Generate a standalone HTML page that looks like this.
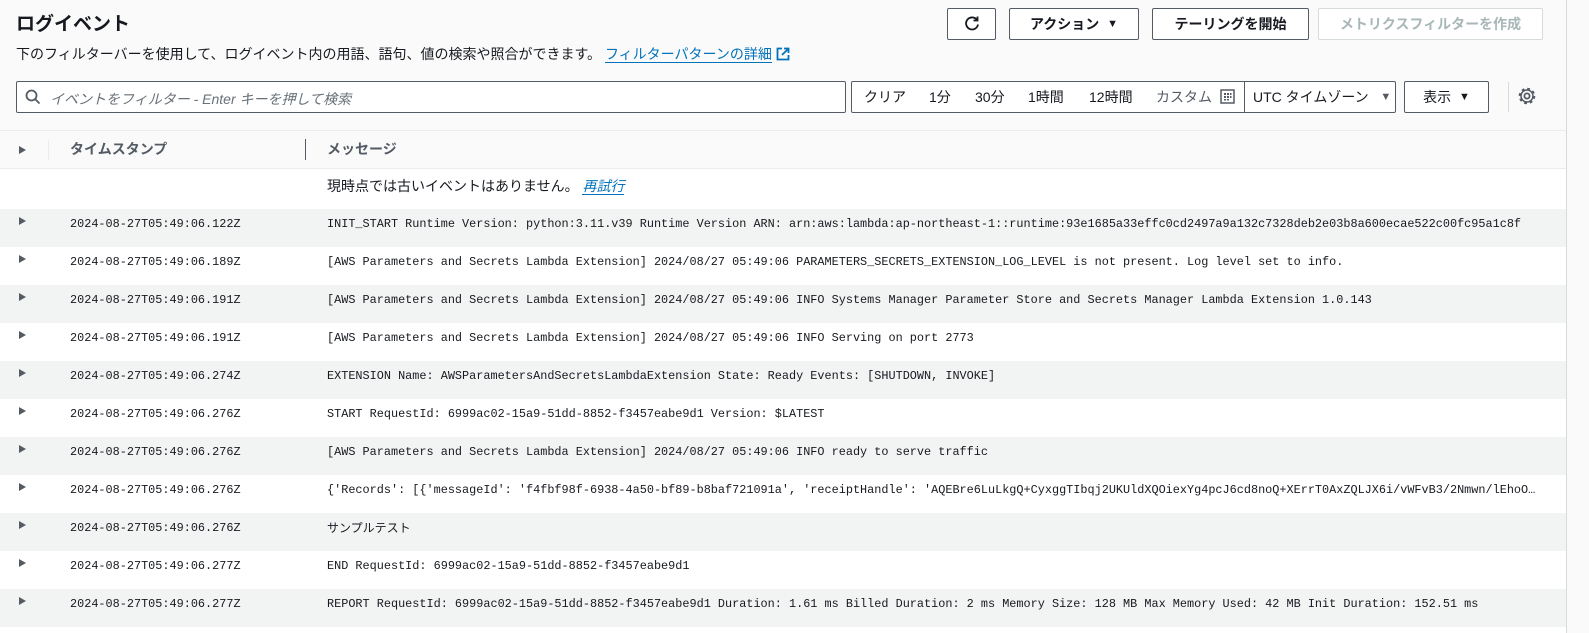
<!DOCTYPE html>
<html><head><meta charset="utf-8"><style>
*{box-sizing:border-box;margin:0;padding:0}
body{width:1589px;height:633px;overflow:hidden;background:#fff;font-family:"Liberation Sans","Noto Sans CJK JP",sans-serif;color:#16191f;position:relative}
.top{position:absolute;left:0;top:0;width:1589px;height:168px;background:#fafafa}
.abs{position:absolute}
.btn{position:absolute;height:32px;border:1px solid #545b64;border-radius:2px;background:#fff;font-size:14px;font-weight:bold;display:flex;align-items:center;justify-content:center;color:#16191f}
.mono{font-family:"Liberation Mono","Noto Sans CJK JP",monospace;font-size:11.85px}
.row{position:absolute;left:0;width:1566px;height:38px}
.row.g{background:#f2f3f3}
.row .tri{position:absolute;left:19px;top:8px;width:0;height:0;border-left:7px solid #545b64;border-top:4.5px solid transparent;border-bottom:4.5px solid transparent}
.row .ts{position:absolute;left:70px;top:7px;line-height:16px;color:#16191f}
.row .msg{position:absolute;left:327px;top:7px;line-height:16px;width:1210px;white-space:nowrap;overflow:hidden;text-overflow:ellipsis;color:#16191f}
.seg{position:absolute;top:81px;height:32px;font-size:14px;display:flex;align-items:center}
</style></head><body>
<div class="top"></div>
<div class="abs" style="left:16px;top:9px;font-size:19px;font-weight:bold">ログイベント</div>
<div class="abs" style="left:16px;top:44px;font-size:14px">下のフィルターバーを使用して、ログイベント内の用語、語句、値の検索や照合ができます。 <span style="color:#0073bb;border-bottom:1px solid #0073bb">フィルターパターンの詳細</span> <svg width="14" height="14" viewBox="0 0 14 14" style="vertical-align:-2px"><path d="M6 1.5H1.5v11h11V8" fill="none" stroke="#0073bb" stroke-width="1.8"/><path d="M8 1.5h4.5V6M12.5 1.5L6 8" fill="none" stroke="#0073bb" stroke-width="1.8"/></svg></div>

<div class="btn" style="left:947px;top:8px;width:49px"><svg width="18" height="18" viewBox="0 0 18 18"><path d="M14 5A6 6 0 1 0 15 9.5" fill="none" stroke="#16191f" stroke-width="1.8"/><path d="M14.5 1.5V5.5H10.5" fill="none" stroke="#16191f" stroke-width="1.8"/></svg></div>
<div class="btn" style="left:1009px;top:8px;width:130px">アクション&nbsp;&nbsp;<span style="font-size:11px">▼</span></div>
<div class="btn" style="left:1152px;top:8px;width:157px">テーリングを開始</div>
<div class="btn" style="left:1318px;top:8px;width:225px;border-color:#d5dbdb;color:#aab7b8">メトリクスフィルターを作成</div>

<div class="abs" style="left:16px;top:81px;width:830px;height:32px;border:1px solid #545b64;border-radius:2px;background:#fff">
<svg class="abs" style="left:8px;top:7px" width="16" height="16" viewBox="0 0 16 16"><circle cx="6.5" cy="6.5" r="5" fill="none" stroke="#545b64" stroke-width="1.8"/><path d="M10 10l4.5 4.5" stroke="#545b64" stroke-width="1.8"/></svg>
<div class="abs" style="left:33px;top:7px;font-size:14px;font-style:italic;color:#687078">イベントをフィルター - Enter キーを押して検索</div>
</div>
<div class="abs" style="left:851px;top:81px;width:545px;height:32px;border:1px solid #545b64;border-radius:2px;background:#fff"></div>
<div class="abs" style="left:1244px;top:82px;width:1px;height:30px;background:#545b64"></div>
<div class="seg" style="left:864px">クリア</div>
<div class="seg" style="left:929px">1分</div>
<div class="seg" style="left:975px">30分</div>
<div class="seg" style="left:1028px">1時間</div>
<div class="seg" style="left:1089px">12時間</div>
<div class="seg" style="left:1156px;color:#545b64">カスタム</div>
<svg class="abs" style="left:1220px;top:89px" width="15" height="15" viewBox="0 0 15 15"><rect x="1" y="1" width="13" height="13" fill="none" stroke="#545b64" stroke-width="1.5"/><g fill="#545b64"><rect x="4" y="4" width="2" height="2"/><rect x="7" y="4" width="2" height="2"/><rect x="10" y="4" width="1.5" height="2"/><rect x="4" y="7" width="2" height="2"/><rect x="7" y="7" width="2" height="2"/><rect x="10" y="7" width="1.5" height="2"/><rect x="4" y="10" width="2" height="1.5"/><rect x="7" y="10" width="2" height="1.5"/></g></svg>
<div class="seg" style="left:1253px">UTC タイムゾーン&nbsp;&nbsp;&nbsp;<span style="font-size:11px;color:#545b64">▼</span></div>
<div class="btn" style="left:1404px;top:81px;width:85px;font-weight:normal">表示&nbsp;&nbsp;<span style="font-size:11px">▼</span></div>
<div class="abs" style="left:1508px;top:82px;width:1px;height:30px;background:#d5dbdb"></div>
<svg class="abs" style="left:1517px;top:86px" width="20" height="20" viewBox="0 0 20 20"><circle cx="10" cy="10" r="2.6" fill="none" stroke="#545b64" stroke-width="1.8"/><circle cx="10" cy="10" r="6.8" fill="none" stroke="#545b64" stroke-width="3" stroke-dasharray="2.6 2.74"/><circle cx="10" cy="10" r="6" fill="none" stroke="#545b64" stroke-width="1.5"/></svg>

<div class="abs" style="left:0;top:130px;width:1566px;height:1px;background:#eaeded"></div>
<div class="abs" style="left:0;top:168px;width:1566px;height:1px;background:#eaeded"></div>
<div class="abs" style="left:19px;top:146px;border-left:7px solid #545b64;border-top:4.5px solid transparent;border-bottom:4.5px solid transparent"></div>
<div class="abs" style="left:48px;top:140px;width:1px;height:20px;background:#eaeded"></div>
<div class="abs" style="left:70px;top:139px;font-size:14px;font-weight:bold;color:#545b64">タイムスタンプ</div>
<div class="abs" style="left:305px;top:139px;width:1px;height:21px;background:#545b64"></div>
<div class="abs" style="left:327px;top:176px;font-size:14px">現時点では古いイベントはありません。 <span style="color:#0073bb;font-style:italic;border-bottom:1px solid #0073bb">再試行</span></div>
<div class="abs" style="left:327px;top:139px;font-size:14px;font-weight:bold;color:#545b64">メッセージ</div>

<div class="abs" style="left:1566px;top:0;width:1px;height:633px;background:#d5dbdb"></div>
<div class="abs" style="left:1567px;top:0;width:22px;height:633px;background:#fafafa"></div>

<div class="row g mono" style="top:209px"><div class="tri"></div><div class="ts">2024-08-27T05:49:06.122Z</div><div class="msg">INIT_START Runtime Version: python:3.11.v39 Runtime Version ARN: arn:aws:lambda:ap-northeast-1::runtime:93e1685a33effc0cd2497a9a132c7328deb2e03b8a600ecae522c00fc95a1c8f</div></div>
<div class="row mono" style="top:247px"><div class="tri"></div><div class="ts">2024-08-27T05:49:06.189Z</div><div class="msg">[AWS Parameters and Secrets Lambda Extension] 2024/08/27 05:49:06 PARAMETERS_SECRETS_EXTENSION_LOG_LEVEL is not present. Log level set to info.</div></div>
<div class="row g mono" style="top:285px"><div class="tri"></div><div class="ts">2024-08-27T05:49:06.191Z</div><div class="msg">[AWS Parameters and Secrets Lambda Extension] 2024/08/27 05:49:06 INFO Systems Manager Parameter Store and Secrets Manager Lambda Extension 1.0.143</div></div>
<div class="row mono" style="top:323px"><div class="tri"></div><div class="ts">2024-08-27T05:49:06.191Z</div><div class="msg">[AWS Parameters and Secrets Lambda Extension] 2024/08/27 05:49:06 INFO Serving on port 2773</div></div>
<div class="row g mono" style="top:361px"><div class="tri"></div><div class="ts">2024-08-27T05:49:06.274Z</div><div class="msg">EXTENSION Name: AWSParametersAndSecretsLambdaExtension State: Ready Events: [SHUTDOWN, INVOKE]</div></div>
<div class="row mono" style="top:399px"><div class="tri"></div><div class="ts">2024-08-27T05:49:06.276Z</div><div class="msg">START RequestId: 6999ac02-15a9-51dd-8852-f3457eabe9d1 Version: $LATEST</div></div>
<div class="row g mono" style="top:437px"><div class="tri"></div><div class="ts">2024-08-27T05:49:06.276Z</div><div class="msg">[AWS Parameters and Secrets Lambda Extension] 2024/08/27 05:49:06 INFO ready to serve traffic</div></div>
<div class="row mono" style="top:475px"><div class="tri"></div><div class="ts">2024-08-27T05:49:06.276Z</div><div class="msg">{'Records': [{'messageId': 'f4fbf98f-6938-4a50-bf89-b8baf721091a', 'receiptHandle': 'AQEBre6LuLkgQ+CyxggTIbqj2UKUldXQOiexYg4pcJ6cd8noQ+XErrT0AxZQLJX6i/vWFvB3/2Nmwn/lEhoOabcdefghijk</div></div>
<div class="row g mono" style="top:513px"><div class="tri"></div><div class="ts">2024-08-27T05:49:06.276Z</div><div class="msg" style="font-family:'Liberation Sans','Noto Sans CJK JP',sans-serif;font-size:12px">サンプルテスト</div></div>
<div class="row mono" style="top:551px"><div class="tri"></div><div class="ts">2024-08-27T05:49:06.277Z</div><div class="msg">END RequestId: 6999ac02-15a9-51dd-8852-f3457eabe9d1</div></div>
<div class="row g mono" style="top:589px"><div class="tri"></div><div class="ts">2024-08-27T05:49:06.277Z</div><div class="msg">REPORT RequestId: 6999ac02-15a9-51dd-8852-f3457eabe9d1 Duration: 1.61 ms Billed Duration: 2 ms Memory Size: 128 MB Max Memory Used: 42 MB Init Duration: 152.51 ms</div></div>
</body></html>
